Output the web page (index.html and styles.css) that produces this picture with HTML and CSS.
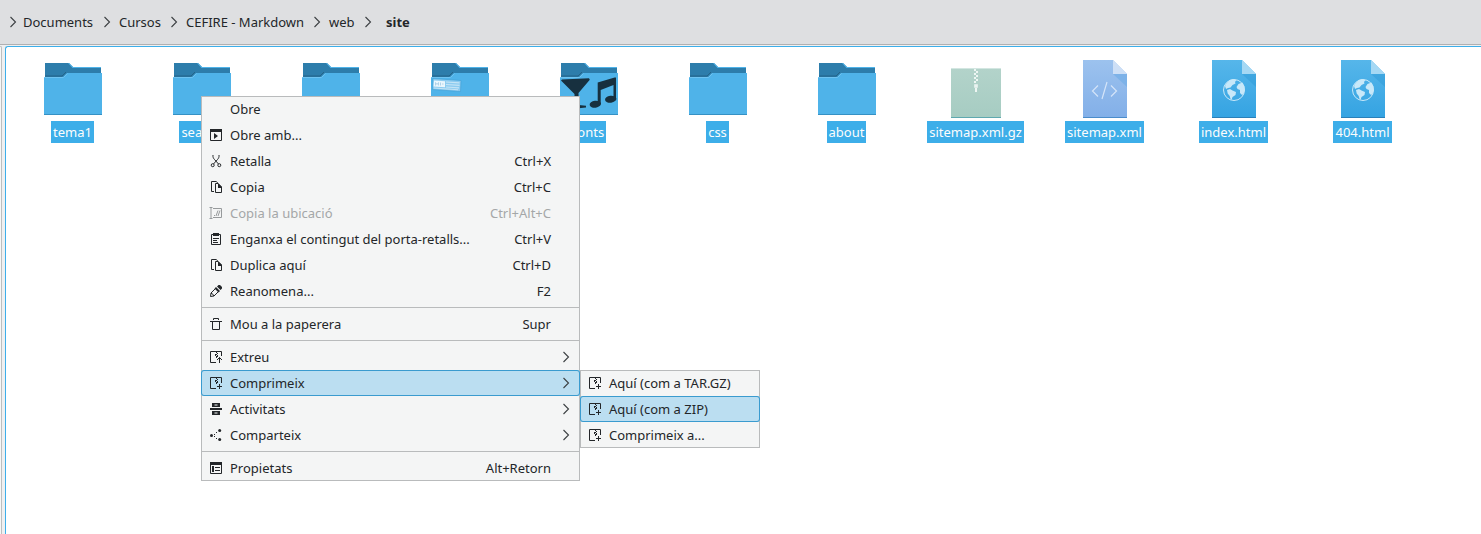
FILE: index.html
```html
<!DOCTYPE html>
<html lang="ca">
<head>
<meta charset="utf-8">
<title>site</title>
<link rel="stylesheet" href="styles.css">
</head>
<body>
<svg class="defs" width="0" height="0" aria-hidden="true">
  <defs>
    <linearGradient id="g-zip" x1="0" y1="0" x2="0" y2="1"><stop offset="0" stop-color="#b3d3ca"/><stop offset="1" stop-color="#a6ccc2"/></linearGradient>
    <linearGradient id="g-xml" x1="0" y1="0" x2="0" y2="1"><stop offset="0" stop-color="#9cc2ee"/><stop offset="1" stop-color="#82afe8"/></linearGradient>
    <linearGradient id="g-html" x1="0" y1="0" x2="0" y2="1"><stop offset="0" stop-color="#56b6ea"/><stop offset="1" stop-color="#34a3e2"/></linearGradient>
    <symbol id="folder" viewBox="0 0 64 64">
      <path d="M4 6h24l4 4h28v14H4z" fill="#2d7dab"/>
      <path d="M28 6l4 4h28v1H31.500l-4.500-5z" fill="#4fb3e9"/>
      <path d="M4 19h17l4-4" fill="none" stroke="#246489"/>
      <path d="M3 20h19l4-4h35v42H3z" fill="#4fb3e9"/>
      <path d="M3 20.500h19.500l4-4" fill="none" stroke="#6fc3f0"/>
      <path d="M3 57h58v1H3z" fill="#3591c4"/>
    </symbol>
    <symbol id="html" viewBox="0 0 64 64">
      <path d="M10 3h30l14 14v44H10z" fill="url(#g-html)"/>
      <path d="M40 17h14v13z" fill="#2593d1" opacity=".35"/>
      <path d="M40 3l14 14H40z" fill="#a5d8f4"/>
      <path d="M10 60h44v1H10z" fill="#2980b9"/>
      <circle cx="32" cy="33" r="10.500" fill="none" stroke="#c8e8f9"/>
      <path d="M23 29c1-3 4-6 8-7l3.500 1-1.500 2 .5 1.500-3 1.500-2 2.500-2.500.5-2 1z" fill="#c8e8f9"/>
      <path d="M25 33l3-1 2.500 1.500 3.500 1.500-.5 3-3 2-.8 2.500h-1l-1-3.500-2-2.500z" fill="#c8e8f9"/>
      <path d="M34.500 30l2-3 4-1.500 2 4 .3 4-1.300 3.500-1.500 1-2-2v-3l-2.500-1z" fill="#c8e8f9"/>
    </symbol>
    <symbol id="chev" viewBox="0 0 8 12"><path d="M1.500 1l5 5-5 5" fill="none" stroke="#3c4043" stroke-width="1.100"/></symbol>
    <symbol id="copy" viewBox="0 0 16 16">
      <path d="M6 12.500H3.500v-10h4.700l1.800 1.800M7.500 4.500H10l3.500 3.500v5.500h-6z" fill="none" stroke="#232629"/>
      <path d="M10 4l4 4v1h-4z" fill="#232629"/>
    </symbol>
    <symbol id="zip" viewBox="0 0 16 16">
      <path d="M8 13.500H2.500v-11h11V8" fill="none" stroke="#232629"/>
      <path d="M8 3h1v1H8zM9 4h1v1H9zM7 5h2v1H7zM9 6h1v1H9zM7 6h1v1H7zM8 7h2v1H8zM8 8h1v1H8z" fill="#232629"/>
      <path d="M9 11.500h5M11.500 9v5" stroke="#232629"/>
    </symbol>
  </defs>
</svg>

<nav class="crumbs">
  <svg class="chev"><use href="#chev"/></svg><span class="crumb documents">Documents</span>
  <svg class="chev"><use href="#chev"/></svg><span class="crumb cursos">Cursos</span>
  <svg class="chev"><use href="#chev"/></svg><span class="crumb cefire">CEFIRE - Markdown</span>
  <svg class="chev"><use href="#chev"/></svg><span class="crumb web">web</span>
  <svg class="chev"><use href="#chev"/></svg><span class="crumb current">site</span>
</nav>

<main class="body">
  <div class="side"></div>
  <div class="view">
    <div class="file"><svg class="pic"><use href="#folder"/></svg><span class="name">tema1</span></div>
    <div class="file"><svg class="pic"><use href="#folder"/></svg><span class="name">search</span></div>
    <div class="file"><svg class="pic"><use href="#folder"/></svg><span class="name">js</span></div>
    <div class="file"><svg class="pic" viewBox="0 0 64 64"><use href="#folder"/>
      <path d="M5 21.500l28 2-.5 11-28-2z" fill="#8ccbf0" stroke="#3f9dd3" stroke-width=".6"/>
      <path d="M6 23.500l11 .8v6l-11.500-.8z" fill="#eaf6fd"/>
      <path d="M7.500 28.500v-3l1.500 2 1.500-2v3M12.500 25.500v3M14 27h1.500" fill="none" stroke="#a9cfe8" stroke-width=".9"/>
      <path d="M18 25l13.500.9M18 27.500l13.500.9M18 30l13 .9M6 31l24 1.700" stroke="#c4e4f6" stroke-width="1.100"/>
    </svg><span class="name">img</span></div>
    <div class="file"><svg class="pic" viewBox="0 0 64 64"><use href="#folder"/>
      <g fill="#17303f"><path d="M4 23.500l1-1 27-1.200.8 1.500-11.300 13.200.2 12 7.300.8v1.800l-14.800 1.500v-2l3.300-2V37z"/>
      <path d="M40.700 25.500l17.800-5.300.5 1V43h-2.500V28l-12.800 5V47h-3z"/>
      <ellipse cx="38.300" cy="47.200" rx="5.700" ry="3.500" transform="rotate(-8 38.300 47.200)"/>
      <ellipse cx="53.700" cy="42.200" rx="5.700" ry="3.500" transform="rotate(-8 53.700 42.200)"/></g>
    </svg><span class="name">fonts</span></div>
    <div class="file"><svg class="pic"><use href="#folder"/></svg><span class="name">css</span></div>
    <div class="file"><svg class="pic"><use href="#folder"/></svg><span class="name">about</span></div>
    <div class="file"><svg class="pic" viewBox="0 0 64 64">
      <path d="M7 11h50v50H7z" fill="url(#g-zip)"/><path d="M7 11h50v1H7z" fill="#d3e6e1"/><path d="M7 60h50v1H7z" fill="#5ea9b0"/>
      <path d="M30 12h2v2h-2zM32 14h2v2h-2zM30 16h2v2h-2zM32 18h2v2h-2zM30 20h2v2h-2zM32 22h2v2h-2zM30 24h2v2h-2z" fill="#eef6f3"/>
      <path d="M31 28h2v2h-2z" fill="none" stroke="#eef6f3" stroke-width="1.600"/><path d="M31 31h2v4h-2z" fill="#eef6f3"/>
    </svg><span class="name">sitemap.xml.gz</span></div>
    <div class="file"><svg class="pic" viewBox="0 0 64 64">
      <path d="M10 3h30l14 14v44H10z" fill="url(#g-xml)"/><path d="M40 17h14v13z" fill="#7db2e8"/><path d="M40 3l14 14H40z" fill="#cddff6"/>
      <path d="M10 60h44v1H10z" fill="#4a8ccb"/>
      <path d="M25 28.500L19.500 34l5.500 5.500M38 28.500l5.500 5.500-5.500 5.500M34 25l-5 17" fill="none" stroke="#d4e4f8" stroke-width="1.200"/>
    </svg><span class="name">sitemap.xml</span></div>
    <div class="file"><svg class="pic"><use href="#html"/></svg><span class="name">index.html</span></div>
    <div class="file"><svg class="pic"><use href="#html"/></svg><span class="name">404.html</span></div>
  </div>
</main>

<div class="menu context">
  <div class="item"><span class="icon"></span><span class="label">Obre</span></div>
  <div class="item"><svg class="icon" viewBox="0 0 16 16"><path d="M2.500 3v10.500h11V3" fill="none" stroke="#232629"/><path d="M2 2h12v3H2zM6 6l4 3-4 3z" fill="#232629"/></svg><span class="label">Obre amb...</span></div>
  <div class="item"><svg class="icon" viewBox="0 0 16 16"><g fill="none" stroke="#232629"><path d="M5 2c-.3 2 .5 3.500 1.500 4.500l4 4.500M11 2c.3 2-.5 3.500-1.500 4.500l-4 4.500"/><circle cx="4.700" cy="12.200" r="1.500"/><circle cx="11.300" cy="12.200" r="1.500"/></g></svg><span class="label">Retalla</span><span class="key">Ctrl+X</span></div>
  <div class="item"><svg class="icon"><use href="#copy"/></svg><span class="label">Copia</span><span class="key">Ctrl+C</span></div>
  <div class="item disabled"><svg class="icon" viewBox="0 0 16 16"><path d="M1.500 2.500h3M1.500 13.500h3M3 2.500v11M5 3.500h8.500v9H5M8 11l2-5.500M10 11l2-5.500M6 10.500h1" fill="none" stroke="#979a9c"/></svg><span class="label">Copia la ubicació</span><span class="key">Ctrl+Alt+C</span></div>
  <div class="item"><svg class="icon" viewBox="0 0 16 16"><path d="M3.500 3.500h9v10h-9z" fill="none" stroke="#232629"/><path d="M5 2h6v3H5zM5 7h6v1H5zM5 9h4v1H5zM5 11h5v1H5z" fill="#232629"/></svg><span class="label">Enganxa el contingut del porta-retalls...</span><span class="key">Ctrl+V</span></div>
  <div class="item"><svg class="icon"><use href="#copy"/></svg><span class="label">Duplica aquí</span><span class="key">Ctrl+D</span></div>
  <div class="item"><svg class="icon" viewBox="0 0 16 16"><path d="M7.500 5.500l-4.500 4.500-.5 3.500 3.500-.5 4.500-4.500M5.500 13c0-1.500-1-2.500-2.500-2.500" fill="none" stroke="#232629"/><path d="M6.500 5.500l1.500-1.500 4 4-1.500 1.500zM9 3.500l1.500-1.500h1.500l2 2v1.500L12.500 7z" fill="#232629"/></svg><span class="label">Reanomena...</span><span class="key">F2</span></div>
  <div class="sep"></div>
  <div class="item"><svg class="icon" viewBox="0 0 16 16"><path d="M2 5.500h12M4.500 5v8.500h7V5M5.500 4V2.500h5V4" fill="none" stroke="#232629"/></svg><span class="label">Mou a la paperera</span><span class="key">Supr</span></div>
  <div class="sep"></div>
  <div class="item"><svg class="icon" viewBox="0 0 16 16"><path d="M8 13.500H2.500v-11h11V7M11.500 8.500V14M9 11l2.500-2.500L14 11" fill="none" stroke="#232629"/><path d="M8 3h1v1H8zM9 4h1v1H9zM7 5h2v1H7zM9 6h1v1H9zM7 6h1v1H7zM8 7h2v1H8zM8 8h1v1H8z" fill="#232629"/></svg><span class="label">Extreu</span><svg class="arrow"><use href="#chev"/></svg></div>
  <div class="item active"><svg class="icon"><use href="#zip"/></svg><span class="label">Comprimeix</span><svg class="arrow"><use href="#chev"/></svg></div>
  <div class="item"><svg class="icon" viewBox="0 0 16 16"><path d="M4 2h8v4H4zM2 7h12v2H2zM4 10h8v4H4z" fill="#232629"/><path d="M6.500 3.500h3v1h-3zM6.500 11.500h3v1h-3z" fill="#f4f5f5"/></svg><span class="label">Activitats</span><svg class="arrow"><use href="#chev"/></svg></div>
  <div class="item"><svg class="icon" viewBox="0 0 16 16"><g fill="#232629"><circle cx="3.500" cy="8.500" r="1.500"/><circle cx="11.700" cy="3.500" r="1.500"/><circle cx="11.700" cy="12.500" r="1.500"/><path d="M6 7h1v1H6zM8 5h1v1H8zM6 9h1v1H6zM8 11h1v1H8z"/></g></svg><span class="label">Comparteix</span><svg class="arrow"><use href="#chev"/></svg></div>
  <div class="sep"></div>
  <div class="item"><svg class="icon" viewBox="0 0 16 16"><path d="M2.500 3v10.500h11V3" fill="none" stroke="#232629"/><path d="M2 2h12v3H2zM4 6h2v6H4zM7 7h5v1H7zM7 10h5v1H7z" fill="#232629"/></svg><span class="label">Propietats</span><span class="key">Alt+Retorn</span></div>
</div>

<div class="menu submenu">
  <div class="item"><svg class="icon"><use href="#zip"/></svg><span class="label">Aquí (com a TAR.GZ)</span></div>
  <div class="item active"><svg class="icon"><use href="#zip"/></svg><span class="label">Aquí (com a ZIP)</span></div>
  <div class="item"><svg class="icon"><use href="#zip"/></svg><span class="label">Comprimeix a...</span></div>
</div>
</body>
</html>
```
FILE: styles.css
```css
* { box-sizing: border-box; }

body {
  margin: 0;
  height: 534px;
  overflow: hidden;
  display: flex;
  flex-direction: column;
  background: #eff0f1;
  color: #232629;
  font: 13px/18px "Noto Sans", sans-serif;
}

.defs { position: absolute; }

.crumbs {
  flex: none;
  height: 45px;
  display: flex;
  align-items: center;
  padding-left: 9px;
  background: #dedfe1;
  border-bottom: 1px solid #afb0b2;
}
.chev { flex: none; width: 8px; height: 12px; margin-right: 8px; }
.chev:first-child { margin-right: 6px; }
.crumb { flex: none; white-space: nowrap; }
.documents { width: 80px; }
.cursos { width: 51px; }
.cefire { width: 127px; }
.web { width: 35px; }
.current { padding-left: 6px; font-weight: 700; }

.body { flex: 1; display: flex; gap: 3px; margin-top: 1px; }
.side {
  width: 2px;
  background: #f6f7f7;
  border-top: 1px solid #bcbebf;
  border-right: 1px solid #bcbebf;
  border-top-right-radius: 2px;
}
.view {
  flex: 1;
  display: flex;
  align-items: flex-start;
  padding: 10px 0 0 2px;
  background: #fff;
  border-top: 1px solid #3daee9;
  border-left: 1px solid #3daee9;
  border-top-left-radius: 3px;
}
.file {
  flex: none;
  width: 129px;
  display: flex;
  flex-direction: column;
  align-items: center;
}
.pic { width: 64px; height: 64px; margin-left: 1px; }
.name {
  height: 22px;
  padding: 0 2px;
  line-height: 22px;
  background: #3daee9;
  color: #fcfcfc;
}

.menu {
  position: absolute;
  background: #f4f5f5;
  box-shadow: inset 0 0 0 1px #b9bbbc;
}
.context { left: 201px; top: 96px; width: 379px; }
.submenu { left: 580px; top: 370px; width: 180px; }
.item {
  height: 26px;
  display: flex;
  align-items: center;
  padding: 0 29px 0 7px;
  white-space: nowrap;
}
.submenu .item { padding-right: 7px; }
.active {
  background: #bbdef1;
  border-radius: 3px;
  box-shadow: inset 0 0 0 1px #3a9bcf;
}
.disabled { color: #a4a7a8; }
.icon { flex: none; width: 16px; height: 16px; margin-right: 6px; }
.label { flex: 1; }
.arrow { flex: none; width: 8px; height: 12px; margin-right: -19px; }
.sep { height: 7px; padding-top: 3px; }
.sep::before { content: ""; display: block; height: 1px; background: #b9bbbc; }
```
